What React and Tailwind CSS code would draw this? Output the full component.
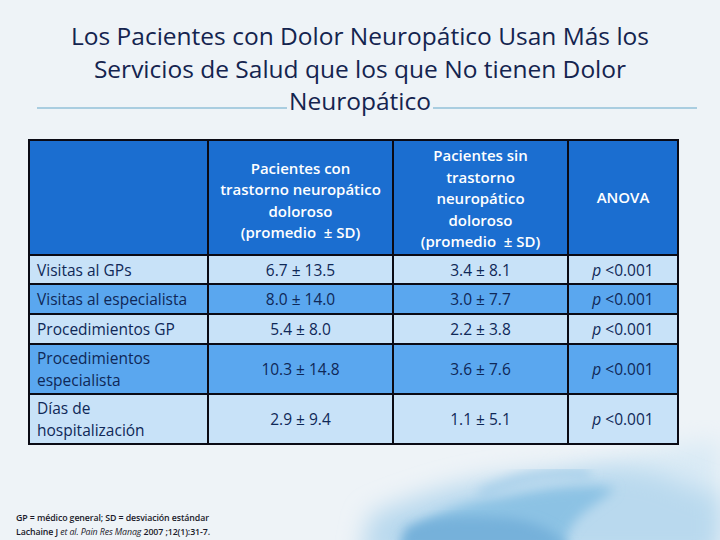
import React from "react";

const rows = [
  { label: ["Visitas al GPs"], a: "6.7 ± 13.5", b: "3.4 ± 8.1", dark: false, h: "h-[29px]" },
  { label: ["Visitas al especialista"], a: "8.0 ± 14.0", b: "3.0 ± 7.7", dark: true, h: "h-[30px]" },
  { label: ["Procedimientos GP"], a: "5.4 ± 8.0", b: "2.2 ± 3.8", dark: false, h: "h-[30px]" },
  { label: ["Procedimientos", "especialista"], a: "10.3 ± 14.8", b: "3.6 ± 7.6", dark: true, h: "h-[50px]" },
  { label: ["Días de", "hospitalización"], a: "2.9 ± 9.4", b: "1.1 ± 5.1", dark: false, h: "h-[50px]" },
];

function Watercolor() {
  return (
    <svg className="absolute left-0 top-0 pointer-events-none" width="720" height="540" viewBox="0 0 720 540">
      <defs>
        <filter id="blur1" x="-20%" y="-20%" width="140%" height="140%">
          <feGaussianBlur stdDeviation="12" />
        </filter>
        <filter id="blur2" x="-20%" y="-20%" width="140%" height="140%">
          <feGaussianBlur stdDeviation="6" />
        </filter>
      </defs>
      <path d="M560 480 C620 455 680 445 720 440 L720 540 L600 540 Z" fill="#d9eaf5" filter="url(#blur1)" />
      <path d="M370 515 C430 490 470 480 520 475 C560 470 600 465 640 470 C670 475 690 490 720 495 L720 560 L360 560 Z" fill="#b9d9ee" filter="url(#blur1)" />
      <path d="M400 550 C420 515 460 503 500 498 C540 490 580 483 615 488 C600 505 565 515 565 550 Z" fill="#8cc2e4" filter="url(#blur2)" />
      <path d="M405 528 C430 515 470 516 505 518 C530 520 555 528 570 550 L400 550 Z" fill="#76b1da" filter="url(#blur2)" />
      <path d="M480 495 C510 480 550 470 590 475" stroke="#a6cfea" strokeWidth="10" fill="none" filter="url(#blur2)" />
    </svg>
  );
}

export default function App() {
  const font = { fontFamily: '"Open Sans", "Noto Sans", sans-serif' };
  return (
    <div className="relative w-[720px] h-[540px] overflow-hidden bg-[#eef3f7]" style={font}>
      <Watercolor />
      <div className="relative flex flex-col">
        {/* Title */}
        <div className="relative pt-[19px] h-[124px]">
          <div className="absolute left-[37px] w-[660px] top-[107px] h-[2px] bg-[#a9cde0]" />
          <div className="relative flex flex-col items-center text-[24.5px] leading-[33px] text-[#14244f] tracking-[0px]">
            <span>Los Pacientes con Dolor Neuropático Usan Más los</span>
            <span>Servicios de Salud que los que No tienen Dolor</span>
            <span className="bg-[#eef3f7] px-[2px] leading-[31px]">Neuropático</span>
          </div>
        </div>
        {/* Table */}
        <div className="pl-[28px] pt-[15px]">
          <table className="border-collapse border-2 border-[#0a0a14] text-[#0f2857] text-[15.5px]">
            <thead>
              <tr className="h-[115px] bg-[#1b6ed0] text-white text-[15px] leading-[21.5px]">
                <th className="w-[179px] border-2 border-[#0a0a14]"></th>
                <th className="w-[185px] border-2 border-[#0a0a14] font-semibold text-center pt-[6px]">
                  Pacientes con<br />trastorno neuropático<br />doloroso<br />(promedio&nbsp; ± SD)
                </th>
                <th className="w-[175px] border-2 border-[#0a0a14] font-semibold text-center pt-[3px]">
                  Pacientes sin<br />trastorno<br />neuropático<br />doloroso<br />(promedio&nbsp; ± SD)
                </th>
                <th className="w-[110px] border-2 border-[#0a0a14] font-semibold text-center">ANOVA</th>
              </tr>
            </thead>
            <tbody>
              {rows.map((r, i) => (
                <tr key={i} className={`${r.h} ${r.dark ? "bg-[#5aa7ef]" : "bg-[#c8e2f8]"} leading-[22px]`}>
                  <td className="border-2 border-[#0a0a14] pl-[7px] text-left">
                    {r.label.map((l, j) => (
                      <div key={j}>{l}</div>
                    ))}
                  </td>
                  <td className="border-2 border-[#0a0a14] text-center">{r.a}</td>
                  <td className="border-2 border-[#0a0a14] text-center">{r.b}</td>
                  <td className="border-2 border-[#0a0a14] text-center">
                    <span className="italic">p</span> &lt;0.001
                  </td>
                </tr>
              ))}
            </tbody>
          </table>
        </div>
        {/* Footnote */}
        <div className="pl-[16px] pt-[66px] text-[8.8px] leading-[14px] text-[#1a1a2a] font-semibold tracking-[-0.1px]">
          <div>GP = médico general; SD = desviación estándar</div>
          <div>
            Lachaine J <span className="italic font-normal">et al. Pain Res Manag</span> 2007 ;12(1):31-7.
          </div>
        </div>
      </div>
    </div>
  );
}
